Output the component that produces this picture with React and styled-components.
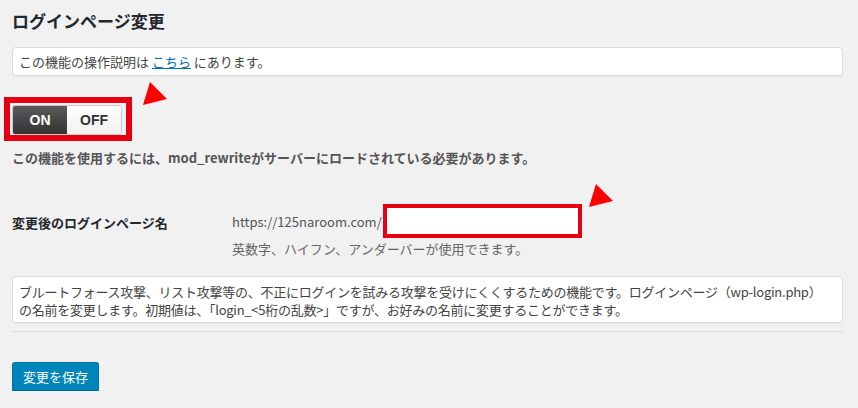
import React from 'react';
import styled, { createGlobalStyle } from 'styled-components';

const GlobalStyle = createGlobalStyle`
  html, body {
    margin: 0;
    padding: 0;
    background: #f1f1f1;
  }
  body {
    font-family: "Noto Sans CJK JP", "Noto Sans", sans-serif;
    font-size: 13px;
    color: #444;
  }
`;

const Page = styled.div`
  padding: 8px 15px 0 12px;
  width: 858px;
  box-sizing: border-box;
`;

const Title = styled.h2`
  margin: 0;
  font-size: 17px;
  line-height: 26px;
  font-weight: 700;
  color: #23282d;
`;

const Box = styled.div`
  margin-top: ${(p) => p.$top}px;
  background: #fff;
  border: 1px solid #dcdcdc;
  border-radius: 4px;
  box-shadow: 0 1px 1px rgba(0, 0, 0, 0.04);
  padding: ${(p) => (p.$multi ? '6px 6px 3px' : '5px 6px')};
  line-height: ${(p) => (p.$multi ? 18 : 17)}px;
  letter-spacing: ${(p) => (p.$multi ? '-0.25px' : 'normal')};
  white-space: ${(p) => (p.$multi ? 'nowrap' : 'normal')};
  color: #444;
`;

const Link = styled.a`
  color: #0073aa;
  text-decoration: underline;
`;

const Annotated = styled.div`
  position: relative;
  display: inline-block;
`;

const Arrow = styled.svg`
  position: absolute;
  left: ${(p) => p.$left}px;
  top: ${(p) => p.$top}px;
  width: 26px;
  height: 25px;
`;

const Highlight = styled.div`
  margin: 21px 0 0 -8px;
  display: inline-block;
  border: 6px solid #e60012;
  padding: 2px 4px 0 2px;
`;

const Toggle = styled.div`
  display: flex;
  width: 110px;
  height: 30px;
  border: 1px solid #c8c8c8;
  border-radius: 3px;
  box-sizing: border-box;
  overflow: hidden;
`;

const ToggleSide = styled.div`
  flex: 1;
  display: flex;
  align-items: center;
  justify-content: center;
  font-family: "Liberation Sans", Arial, sans-serif;
  font-weight: 700;
  font-size: 14px;
  color: ${(p) => (p.$active ? '#fff' : '#333')};
  background: ${(p) =>
    p.$active
      ? 'linear-gradient(#5a5a5a, #333)'
      : 'linear-gradient(#fdfdfd, #f1f1f1)'};
`;

const Note = styled.p`
  margin: 7px 0 0;
  line-height: 20px;
  font-weight: 700;
  color: #555;
`;

const FormRow = styled.div`
  margin-top: 36px;
  display: grid;
  grid-template-columns: 220px 1fr;
  align-items: center;
`;

const Label = styled.div`
  font-weight: 700;
  color: #23282d;
  padding-top: 3px;
`;

const Field = styled.div`
  display: flex;
  align-items: center;
  color: #555;
`;

const Input = styled.input`
  width: 199px;
  height: 34px;
  box-sizing: border-box;
  border: 4px solid #e60012;
  background: #fff;
  margin: 0 0 0 1px;
  outline: none;
`;

const Hint = styled.div`
  margin-top: 2px;
  padding-left: 220px;
  line-height: 18px;
  color: #666;
`;

const Divider = styled.hr`
  margin: 8px 0 0;
  border: 0;
  border-top: 1px solid #dcdcdc;
`;

const SaveButton = styled.button`
  margin-top: 30px;
  height: 29px;
  padding: 0 10px;
  background: #0085ba;
  border: 1px solid #0073aa;
  border-bottom-color: #006799;
  border-radius: 3px;
  box-shadow: 0 1px 0 #006799;
  color: #fff;
  font-family: "Noto Sans CJK JP", sans-serif;
  font-size: 13px;
`;

const RedArrow = ({ left, top }) => (
  <Arrow $left={left} $top={top} viewBox="0 0 26 25">
    <polygon points="0,23 7,0 24,17" fill="#f00" />
  </Arrow>
);

export default function App() {
  return (
    <>
      <GlobalStyle />
      <Page>
        <Title>ログインページ変更</Title>
        <Box $top={13}>
          この機能の操作説明は <Link href="#">こちら</Link> にあります。
        </Box>
        <Annotated>
          <Highlight>
            <Toggle>
              <ToggleSide $active>ON</ToggleSide>
              <ToggleSide>OFF</ToggleSide>
            </Toggle>
          </Highlight>
          <RedArrow left={131} top={6} />
        </Annotated>
        <Note>この機能を使用するには、mod_rewriteがサーバーにロードされている必要があります。</Note>
        <FormRow>
          <Label>変更後のログインページ名</Label>
          <Field>
            https://125naroom.com/
            <Annotated>
              <Input type="text" />
              <RedArrow left={207} top={-20} />
            </Annotated>
          </Field>
        </FormRow>
        <Hint>英数字、ハイフン、アンダーバーが使用できます。</Hint>
        <Box $top={18} $multi>
          ブルートフォース攻撃、リスト攻撃等の、不正にログインを試みる攻撃を受けにくくするための機能です。ログインページ（wp-login.php）
          <br />
          の名前を変更します。初期値は、「login_&lt;5桁の乱数&gt;」ですが、お好みの名前に変更することができます。
        </Box>
        <Divider />
        <SaveButton>変更を保存</SaveButton>
      </Page>
    </>
  );
}
